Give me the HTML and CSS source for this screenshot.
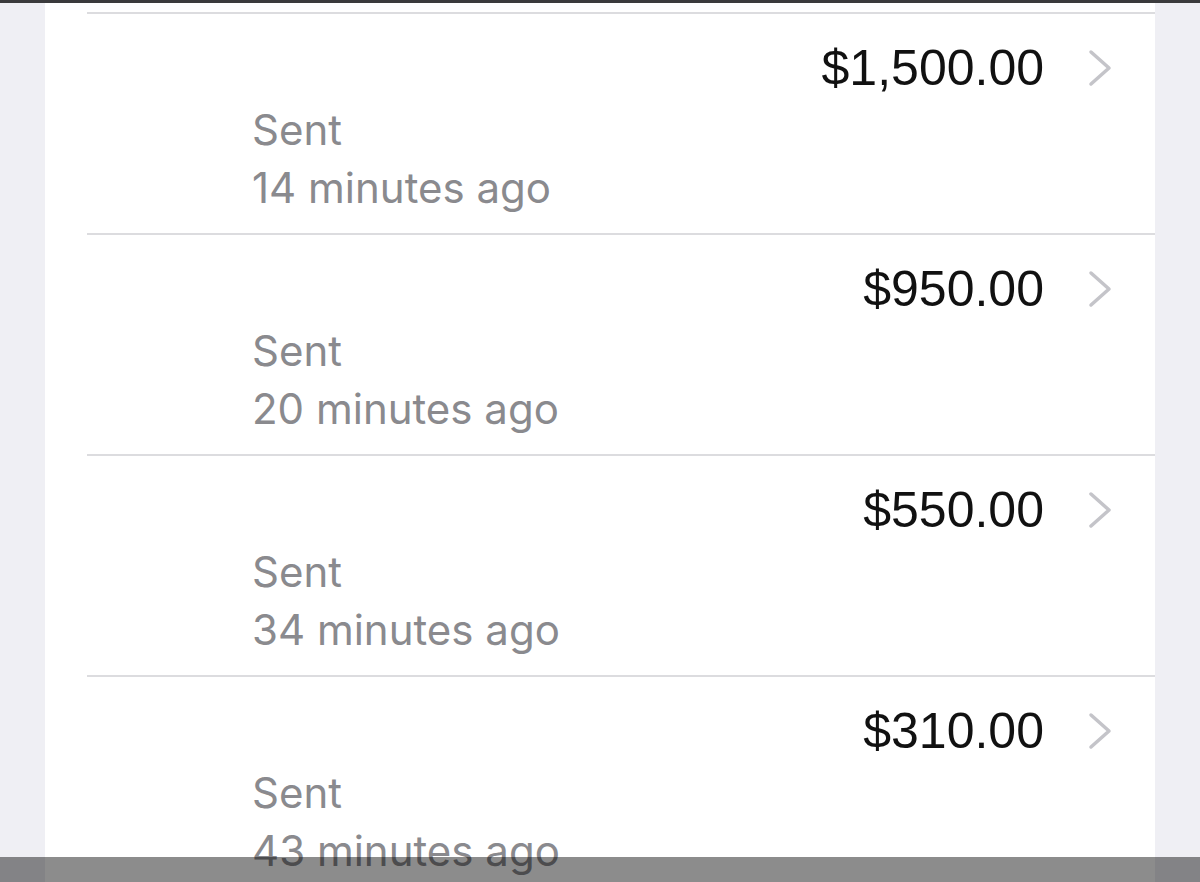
FILE: index.html
```html
<!DOCTYPE html>
<html lang="en">
<head>
    <meta charset="UTF-8">
    <meta name="viewport" content="width=device-width, initial-scale=1.0">
    <title>Payments</title>
    <link rel="stylesheet" href="styles.css">
</head>
<body>
    <div class="topbar"></div>
    <div class="panel">
        <div class="list">
            <div class="row">
                <div class="amount">
                    <span>$1,500.00</span>
                    <svg class="chevron" width="24" height="38" viewBox="0 0 24 38"><polyline points="3,3 21,19 3,35" /></svg>
                </div>
                <div class="status">Sent</div>
                <div class="time">14 minutes ago</div>
            </div>
            <div class="row">
                <div class="amount">
                    <span>$950.00</span>
                    <svg class="chevron" width="24" height="38" viewBox="0 0 24 38"><polyline points="3,3 21,19 3,35" /></svg>
                </div>
                <div class="status">Sent</div>
                <div class="time">20 minutes ago</div>
            </div>
            <div class="row">
                <div class="amount">
                    <span>$550.00</span>
                    <svg class="chevron" width="24" height="38" viewBox="0 0 24 38"><polyline points="3,3 21,19 3,35" /></svg>
                </div>
                <div class="status">Sent</div>
                <div class="time">34 minutes ago</div>
            </div>
            <div class="row">
                <div class="amount">
                    <span>$310.00</span>
                    <svg class="chevron" width="24" height="38" viewBox="0 0 24 38"><polyline points="3,3 21,19 3,35" /></svg>
                </div>
                <div class="status">Sent</div>
                <div class="time">43 minutes ago</div>
            </div>
        </div>
    </div>
    <div class="bottom-bar"></div>
</body>
</html>
```

FILE: styles.css
```css
body {
    margin: 0;
    padding: 0;
    background-color: #efeff4;
    font-family: 'Inter', 'Liberation Sans', sans-serif;
    height: 100vh;
    overflow: hidden;
}

.topbar {
    height: 3px;
    background-color: #3a3a3c;
}

.panel {
    margin: 0 45px;
    background: #fff;
    padding-top: 9px;
    min-height: 100vh;
}

.row {
    margin-left: 42px;
    border-top: 2px solid #dcdcdf;
    height: 219px;
    padding-right: 43px;
    padding-left: 165px;
    box-sizing: content-box;
}

.amount {
    display: flex;
    justify-content: flex-end;
    align-items: center;
    gap: 44px;
    padding-top: 26px;
    height: 56px;
    font-family: 'Liberation Sans', sans-serif;
    font-size: 50px;
    color: #111;
}

.chevron {
    fill: none;
    stroke: #c4c4c9;
    stroke-width: 3.5;
    stroke-linecap: round;
    stroke-linejoin: round;
}

.status, .time {
    font-size: 42px;
    line-height: 58px;
    color: #8a8a8e;
}

.status {
    margin-top: 5px;
}

.bottom-bar {
    position: fixed;
    left: 0;
    right: 0;
    bottom: 0;
    height: 25px;
    background: rgba(0, 0, 0, 0.45);
}
```
